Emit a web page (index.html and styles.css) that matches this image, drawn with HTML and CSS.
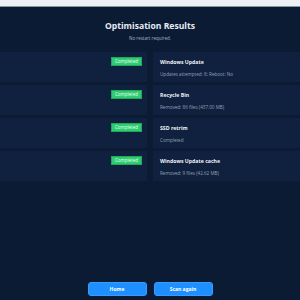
FILE: index.html
```html
<!DOCTYPE html>
<html>
<head>
  <meta name="viewport" content="width=device-width, initial-scale=1">
  <title>Optimisation Results</title>
  <link rel="stylesheet" href="styles.css">
</head>
<body>
  <div class="top-bar"></div>
  <div class="results-page">
    <h1 class="results-title">Optimisation Results</h1>
    <p class="results-subtitle">No restart required.</p>

    <div class="results-grid">
      <div class="result-cell status-cell"><span class="status-badge">Completed</span></div>
      <div class="result-cell detail-cell">
        <div class="task-name">Windows Update</div>
        <div class="task-info">Updates attempted: 8; Reboot: No</div>
      </div>

      <div class="result-cell status-cell"><span class="status-badge">Completed</span></div>
      <div class="result-cell detail-cell">
        <div class="task-name">Recycle Bin</div>
        <div class="task-info">Removed: 86 files (437.00 MB)</div>
      </div>

      <div class="result-cell status-cell"><span class="status-badge">Completed</span></div>
      <div class="result-cell detail-cell">
        <div class="task-name">SSD retrim</div>
        <div class="task-info">Completed</div>
      </div>

      <div class="result-cell status-cell"><span class="status-badge">Completed</span></div>
      <div class="result-cell detail-cell">
        <div class="task-name">Windows Update cache</div>
        <div class="task-info">Removed: 9 files (42.62 MB)</div>
      </div>
    </div>

    <div class="page-actions">
      <button class="action-button">Home</button>
      <button class="action-button">Scan again</button>
    </div>
  </div>
</body>
</html>
```

FILE: styles.css
```css
html, body {
  margin: 0;
  height: 100%;
}
body {
  background: #0c1b34;
  font-family: "Open Sans", "Noto Sans", sans-serif;
  color: #e6ebf2;
  display: flex;
  flex-direction: column;
  overflow: hidden;
}
.top-bar {
  height: 6px;
  background: #eef1f3;
  border-bottom: 1px solid #8a929c;
  flex-shrink: 0;
}
.results-page {
  flex: 1;
  display: flex;
  flex-direction: column;
  align-items: center;
  overflow: hidden;
}
.results-title {
  margin: 13px 0 0;
  font-size: 8.6px;
  line-height: 12px;
  font-weight: 700;
}
.results-subtitle {
  margin: 3px 0 0;
  font-size: 4.5px;
  line-height: 6px;
  color: #aab4c3;
}
.results-grid {
  margin-top: 11px;
  width: 300px;
  display: grid;
  grid-template-columns: 170px 170px;
  justify-content: center;
  column-gap: 6px;
  row-gap: 3px;
}
.result-cell {
  background: #10203f;
  height: 30px;
  box-sizing: border-box;
}
.status-cell {
  display: flex;
  justify-content: flex-end;
  align-items: flex-start;
  padding: 5px 5px 0 0;
}
.status-badge {
  background: #2ecc71;
  border: 1px solid #1fa75a;
  color: #eafff2;
  font-size: 4.5px;
  line-height: 7px;
  width: 29px;
  text-align: center;
}
.detail-cell {
  padding: 7px 0 0 7px;
}
.task-name {
  font-size: 5.2px;
  line-height: 6px;
  font-weight: 700;
  color: #eef2f7;
}
.task-info {
  margin-top: 6px;
  font-size: 4.6px;
  line-height: 6px;
  color: #95a1b4;
}
.page-actions {
  margin-top: auto;
  margin-bottom: 4px;
  display: flex;
  gap: 7px;
}
.action-button {
  width: 59px;
  height: 14px;
  border: 1px solid #3a9bff;
  border-radius: 3px;
  background: #1e8fff;
  color: #ffffff;
  font-family: inherit;
  font-size: 5px;
  font-weight: 700;
  padding: 0;
}
```
